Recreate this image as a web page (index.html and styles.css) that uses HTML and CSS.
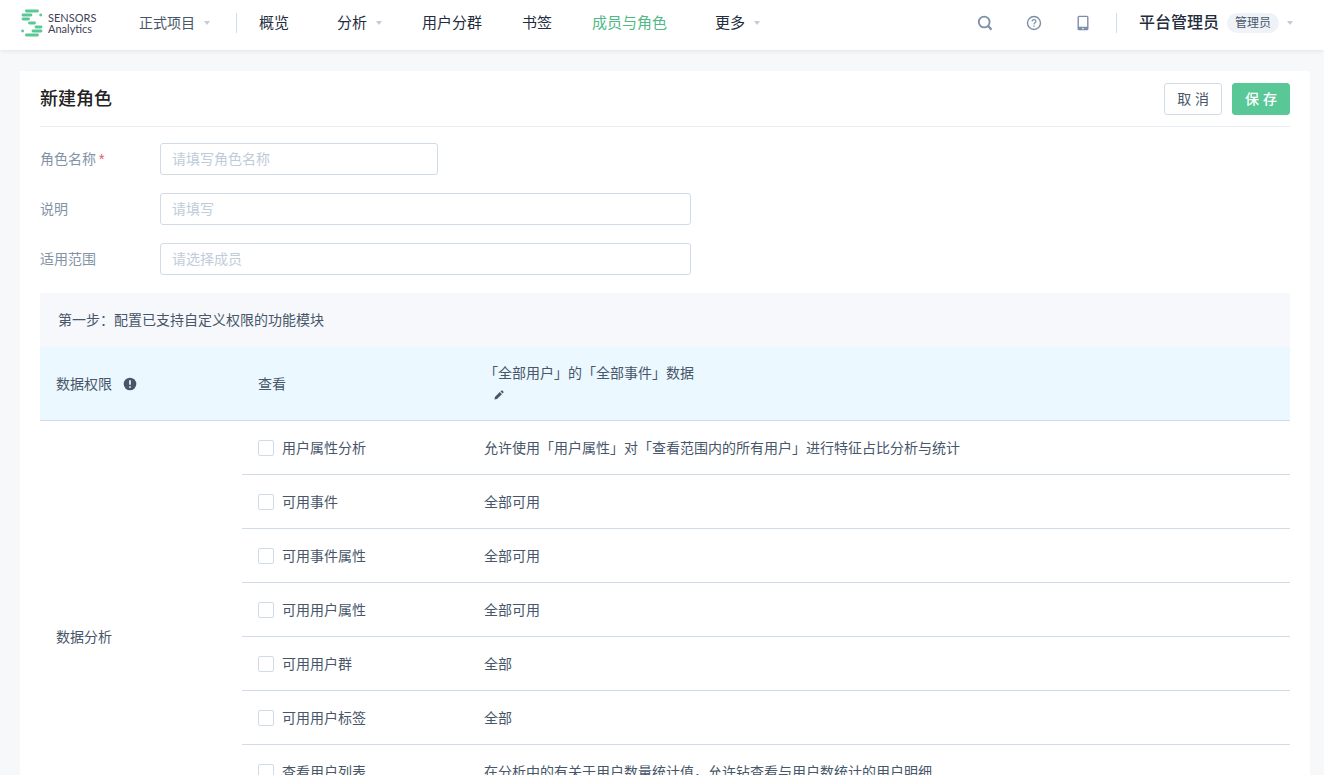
FILE: index.html
```html
<!DOCTYPE html>
<html lang="zh-CN">
<head>
<meta charset="utf-8">
<title>新建角色</title>
<link rel="stylesheet" href="styles.css">
</head>
<body>
<header class="topbar">
  <a class="logo" href="#">
    <svg class="logo-mark" width="23" height="28" viewBox="0 0 23 28" fill="none" stroke="#5ac797" stroke-width="2.8" stroke-linecap="round" aria-hidden="true">
      <path d="M6.400 2H17.500M3 6h8M3 10h5.500M9.500 14h5M16 18h5M13 22h8M6.400 26H17.500"/>
      <path d="M20.700 6h.01M2.600 22h.01"/>
    </svg>
    <span class="logo-text">SENSORS<br>Analytics</span>
  </a>
  <button class="project" type="button">正式项目<span class="caret"></span></button>
  <nav class="nav">
    <a href="#">概览</a>
    <a class="drop" href="#">分析<span class="caret"></span></a>
    <a href="#">用户分群</a>
    <a href="#">书签</a>
    <a class="active" href="#">成员与角色</a>
    <a class="drop" href="#">更多<span class="caret"></span></a>
  </nav>
  <div class="tools">
    <button class="icon-btn" type="button" aria-label="搜索">
      <svg width="16" height="16" viewBox="0 0 16 16" fill="none" stroke="#7d8fa8"><circle cx="7.200" cy="7" r="5.400" stroke-width="1.800"/><path d="M11.200 11l3.300 3.700" stroke-width="2.200"/></svg>
    </button>
    <button class="icon-btn" type="button" aria-label="帮助">
      <svg width="16" height="16" viewBox="0 0 16 16" fill="none" stroke="#7d8fa8" stroke-width="1.400"><circle cx="8" cy="8" r="6.500"/><path d="M6.100 6.600C6.100 5.400 6.900 4.700 8 4.700s1.900.7 1.900 1.700c0 1.300-1.900 1.500-1.900 3" stroke-width="1.200"/><path d="M8 10.400v1.300" stroke-width="1.300"/></svg>
    </button>
    <button class="icon-btn" type="button" aria-label="移动端">
      <svg width="16" height="16" viewBox="0 0 16 16"><path fill="#7d8fa8" fill-rule="evenodd" d="M4 .7h8a1.500 1.500 0 0 1 1.500 1.500v11.600a1.500 1.500 0 0 1-1.500 1.500H4a1.500 1.500 0 0 1-1.500-1.500V2.200A1.500 1.500 0 0 1 4 .7zM3.900 2.100v9.700h8.200V2.100zM8 12.800a.8.8 0 1 0 0 1.600.8.8 0 0 0 0-1.600z"/></svg>
    </button>
  </div>
  <button class="account" type="button"><span class="account-name">平台管理员</span><span class="tag">管理员</span><span class="caret"></span></button>
</header>

<main class="page">
  <form class="card">
    <div class="card-head">
      <h1>新建角色</h1>
      <div class="actions">
        <button class="btn" type="button">取 消</button>
        <button class="btn btn-primary" type="submit">保 存</button>
      </div>
    </div>
    <div class="fields">
      <div class="field">
        <label for="role-name">角色名称<span class="required">*</span></label>
        <input class="text short" id="role-name" type="text" placeholder="请填写角色名称">
      </div>
      <div class="field">
        <label for="role-desc">说明</label>
        <input class="text" id="role-desc" type="text" placeholder="请填写">
      </div>
      <div class="field">
        <label for="role-scope">适用范围</label>
        <input class="text" id="role-scope" type="text" placeholder="请选择成员">
      </div>
    </div>
    <h2 class="step">第一步：配置已支持自定义权限的功能模块</h2>
    <table class="perms">
      <colgroup><col class="col-group"><col class="col-name"><col></colgroup>
      <tbody>
        <tr class="data-row">
          <th scope="row"><span class="with-icon">数据权限
            <svg width="14" height="14" viewBox="0 0 14 14" aria-hidden="true"><circle cx="7" cy="7" r="6.300" fill="#475669"/><path d="M7 3.200v4.500M7 9.200v1.600" stroke="#ecf8ff" stroke-width="1.700"/></svg></span></th>
          <td>查看</td>
          <td class="scope">「全部用户」的「全部事件」数据
            <button class="edit" type="button" aria-label="编辑"><svg width="10" height="10" viewBox="0 0 10 10" fill="#475669"><path d="M.5 9.500l.4-2.500 4.900-4.900 2.100 2.100L3 9.100zM6.500 1.400l.7-.7c.4-.4 1-.4 1.400 0l.7.7c.4.4.4 1 0 1.400l-.7.7z"/></svg></button>
          </td>
        </tr>
        <tr>
          <th scope="rowgroup" rowspan="8">数据分析</th>
          <td><label class="check"><input type="checkbox">用户属性分析</label></td>
          <td>允许使用「用户属性」对「查看范围内的所有用户」进行特征占比分析与统计</td>
        </tr>
        <tr><td><label class="check"><input type="checkbox">可用事件</label></td><td>全部可用</td></tr>
        <tr><td><label class="check"><input type="checkbox">可用事件属性</label></td><td>全部可用</td></tr>
        <tr><td><label class="check"><input type="checkbox">可用用户属性</label></td><td>全部可用</td></tr>
        <tr><td><label class="check"><input type="checkbox">可用用户群</label></td><td>全部</td></tr>
        <tr><td><label class="check"><input type="checkbox">可用用户标签</label></td><td>全部</td></tr>
        <tr><td><label class="check"><input type="checkbox">查看用户列表</label></td><td>在分析中的有关于用户数量统计值，允许钻查看与用户数统计的用户明细</td></tr>
        <tr><td></td><td></td></tr>
      </tbody>
    </table>
  </form>
</main>
</body>
</html>
```
FILE: styles.css
```css
* { box-sizing: border-box; }

body {
  display: flex;
  flex-direction: column;
  height: 100vh;
  margin: 0;
  overflow: hidden;
  background: #f7f8fa;
  color: #475669;
  font: 14px/22px "Liberation Sans", "Noto Sans CJK SC", sans-serif;
}

button, input { font: inherit; color: inherit; }
button { padding: 0; border: 0; background: none; cursor: pointer; }
a { color: inherit; text-decoration: none; }
svg { display: block; }

.topbar {
  position: relative;
  z-index: 1;
  display: flex;
  flex: none;
  align-items: center;
  height: 50px;
  padding: 0 31px 4px 20px;
  background: #fff;
  box-shadow: 0 1px 4px rgba(31, 45, 61, .1);
}

.logo { display: flex; align-items: center; gap: 5px; width: 119px; }
.logo-text { color: #40405a; font: 11px/11px Lato, sans-serif; }

.caret {
  border: 3px solid transparent;
  border-top: 4px solid #c0ccda;
  border-bottom: 0;
}

.project {
  display: flex;
  align-items: center;
  gap: 9px;
  height: 20px;
  padding-right: 26px;
  border-right: 1px solid #d3dce6;
}

.nav {
  display: flex;
  gap: 40px;
  margin-left: 22px;
  color: #1f2d3d;
  font-size: 15px;
}
.nav a { display: flex; align-items: center; gap: 9px; }
.nav .drop { margin-left: 8px; }
.nav .active { color: #51b988; }

.tools {
  display: flex;
  align-items: center;
  gap: 33px;
  height: 20px;
  margin-left: auto;
  padding-right: 25px;
  border-right: 1px solid #d3dce6;
}

.account { display: flex; align-items: center; margin-left: 22px; }
.account-name { color: #1f2d3d; font-size: 16px; font-weight: 500; }
.tag {
  margin: 0 8px;
  padding: 0 8px;
  border-radius: 10px;
  background: #eff2f7;
  font-size: 12px;
  line-height: 20px;
}

.page { flex: 1; min-height: 0; padding: 21px 14px 0 20px; overflow: hidden; }
.card { padding: 0 20px; background: #fff; }

.card-head {
  display: flex;
  align-items: center;
  justify-content: space-between;
  height: 56px;
  border-bottom: 1px solid #e9edf3;
}
h1 { margin: 0; color: #222; font-size: 18px; font-weight: 500; }
.actions { display: flex; gap: 10px; }
.btn {
  height: 32px;
  padding: 0 12px;
  border: 1px solid #d3dce6;
  border-radius: 3px;
  background: #fff;
}
.btn-primary { border-color: #5ac797; background: #5ac797; color: #fff; font-weight: 500; }

.fields { display: grid; gap: 18px; padding: 16px 0 18px; }
.field { display: flex; align-items: center; }
.field label { width: 120px; color: #8492a6; }
.required { margin-left: 3px; color: #e8555a; }
.text {
  width: 531px;
  height: 32px;
  padding: 0 11px;
  border: 1px solid #d0dbe6;
  border-radius: 3px;
  background: #fff;
}
.short { width: 278px; }
.text::placeholder { color: #c0ccda; opacity: 1; }

.step {
  margin: 0;
  padding: 0 18px;
  background: #f6f8fc;
  font-size: 14px;
  font-weight: 400;
  line-height: 54px;
}

.perms { width: 100%; border-collapse: separate; border-spacing: 0; table-layout: fixed; }
.col-group { width: 202px; }
.col-name { width: 226px; }
.perms th, .perms td {
  height: 54px;
  padding: 0 16px;
  border-bottom: 1px solid #d0dbe6;
  font-weight: 400;
  text-align: left;
  vertical-align: middle;
}
.data-row { background: #ecf8ff; }
.perms .data-row th, .perms .data-row td { height: 74px; }
.with-icon { display: flex; align-items: center; gap: 11px; }
.edit { display: block; margin: 6px 0 6px 10px; }

.check { display: flex; align-items: center; gap: 8px; }
.check input {
  width: 16px;
  height: 16px;
  margin: 0;
  border: 1px solid #d0dbe6;
  border-radius: 2px;
  background: #fff;
  appearance: none;
}
```
